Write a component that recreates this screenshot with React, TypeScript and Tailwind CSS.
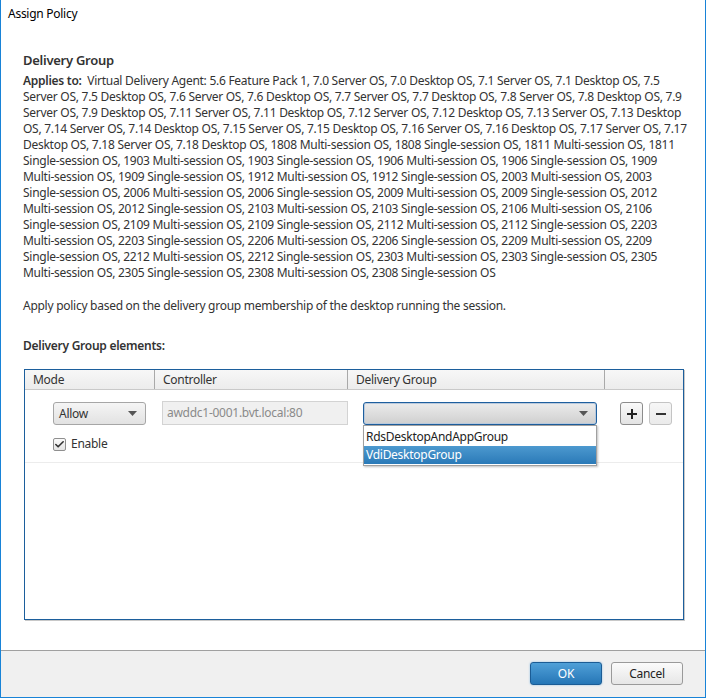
import { Check } from "lucide-react";

const lines = [
  "Server OS, 7.5 Desktop OS, 7.6 Server OS, 7.6 Desktop OS, 7.7 Server OS, 7.7 Desktop OS, 7.8 Server OS, 7.8 Desktop OS, 7.9",
  "Server OS, 7.9 Desktop OS, 7.11 Server OS, 7.11 Desktop OS, 7.12 Server OS, 7.12 Desktop OS, 7.13 Server OS, 7.13 Desktop",
  "OS, 7.14 Server OS, 7.14 Desktop OS, 7.15 Server OS, 7.15 Desktop OS, 7.16 Server OS, 7.16 Desktop OS, 7.17 Server OS, 7.17",
  "Desktop OS, 7.18 Server OS, 7.18 Desktop OS, 1808 Multi-session OS, 1808 Single-session OS, 1811 Multi-session OS, 1811",
  "Single-session OS, 1903 Multi-session OS, 1903 Single-session OS, 1906 Multi-session OS, 1906 Single-session OS, 1909",
  "Multi-session OS, 1909 Single-session OS, 1912 Multi-session OS, 1912 Single-session OS, 2003 Multi-session OS, 2003",
  "Single-session OS, 2006 Multi-session OS, 2006 Single-session OS, 2009 Multi-session OS, 2009 Single-session OS, 2012",
  "Multi-session OS, 2012 Single-session OS, 2103 Multi-session OS, 2103 Single-session OS, 2106 Multi-session OS, 2106",
  "Single-session OS, 2109 Multi-session OS, 2109 Single-session OS, 2112 Multi-session OS, 2112 Single-session OS, 2203",
  "Multi-session OS, 2203 Single-session OS, 2206 Multi-session OS, 2206 Single-session OS, 2209 Multi-session OS, 2209",
  "Single-session OS, 2212 Multi-session OS, 2212 Single-session OS, 2303 Multi-session OS, 2303 Single-session OS, 2305",
  "Multi-session OS, 2305 Single-session OS, 2308 Multi-session OS, 2308 Single-session OS",
];

function Caret({ className = "" }: { className?: string }) {
  return (
    <svg width="9" height="5" viewBox="0 0 9 5" className={className}>
      <path d="M0 0 L9 0 L4.5 5 Z" fill="#555" />
    </svg>
  );
}

export default function App() {
  return (
    <div className="w-[707px] h-[699px] bg-white text-[12px] text-[#333] tracking-[-0.27px]" style={{ fontFamily: '"Noto Sans", sans-serif' }}>
      <div className="w-[706px] h-[698px] border-x border-b border-[#1883d7] flex flex-col">
        <div className="h-[29px] pl-[7px] pt-[6px] text-black leading-[16px]">Assign Policy</div>

        <div className="flex-1 pl-[22px] pr-[20px] pt-[23px]">
          <div className="text-[13px] font-semibold leading-[17px]">Delivery Group</div>
          <div className="mt-[4px] leading-[16px] whitespace-nowrap">
            <div>
              <span className="font-semibold">Applies to:</span>&nbsp; Virtual Delivery Agent: 5.6 Feature Pack 1, 7.0 Server OS, 7.0 Desktop OS, 7.1 Server OS, 7.1 Desktop OS, 7.5
            </div>
            {lines.map((l) => (
              <div key={l}>{l}</div>
            ))}
          </div>
          <div className="mt-[17px] leading-[16px]">Apply policy based on the delivery group membership of the desktop running the session.</div>
          <div className="mt-[24px] font-semibold leading-[16px]">Delivery Group elements:</div>

          <div className="mt-[15px] ml-[1px] w-[660px] h-[251px] border border-[#1c5e9c] shadow-[1px_1px_0_#c8c8c8] flex flex-col">
            <div className="h-[20px] flex bg-gradient-to-b from-[#f7f7f7] to-[#ececec] border-b border-[#c9c9c9] leading-[19px]">
              <div className="w-[130px] pl-[8px] border-r border-[#a9a9a9]">Mode</div>
              <div className="w-[193px] pl-[8px] border-r border-[#a9a9a9]">Controller</div>
              <div className="w-[257px] pl-[8px] border-r border-[#a9a9a9]">Delivery Group</div>
              <div className="flex-1" />
            </div>

            <div className="h-[73px] border-b border-[#ececec] flex pt-[12px]">
              <div className="w-[137px] pl-[28px] flex flex-col">
                <div className="w-[93px] h-[23px] rounded-[3px] border border-[#a6a6a6] bg-gradient-to-b from-[#f5f5f5] to-[#e2e2e2] flex items-center justify-between pl-[5px] pr-[8px]">
                  <span>Allow</span>
                  <Caret />
                </div>
                <div className="mt-[10px] flex items-center gap-[5px]">
                  <div className="w-[13px] h-[13px] border border-[#8f8f8f] rounded-[2px] bg-gradient-to-b from-[#fafafa] to-[#e4e4e4] flex items-center justify-center">
                    <Check size={11} strokeWidth={3.5} color="#333" />
                  </div>
                  <span>Enable</span>
                </div>
              </div>
              <div className="w-[186px] h-[24px] -mt-[1px] border border-[#d3d3d3] bg-[#f0f0f0] text-[#8a8a8a] leading-[22px] pl-[4px]">
                awddc1-0001.bvt.local:80
              </div>
              <div className="ml-[15px] relative w-[234px]">
                <div className="h-[23px] rounded-[3px] border border-[#1e5f9e] bg-gradient-to-b from-[#ececec] to-[#cfcfcf] shadow-[inset_0_0_0_1px_#b9c9dc] flex items-center justify-end pr-[8px]">
                  <Caret />
                </div>
                <div className="absolute left-0 top-[23px] w-[234px] bg-white border border-[#a0a0a0] shadow-[1px_1px_2px_rgba(0,0,0,0.25)] pt-[2px] pb-[1px] z-10">
                  <div className="h-[18px] leading-[18px] pl-[2px] text-[#222]">RdsDesktopAndAppGroup</div>
                  <div className="h-[18px] leading-[18px] pl-[2px] text-white bg-gradient-to-b from-[#4c99cf] to-[#2a7ab8]">VdiDesktopGroup</div>
                </div>
              </div>
              <div className="ml-[23px] flex gap-[6px]">
                <div className="w-[23px] h-[23px] rounded-[3px] border border-[#8c8c8c] bg-gradient-to-b from-[#fafafa] to-[#e3e3e3] flex items-center justify-center">
                  <svg width="12" height="12" viewBox="0 0 12 12"><path d="M6 1 V11 M1 6 H11" stroke="#222" strokeWidth="2" /></svg>
                </div>
                <div className="w-[23px] h-[23px] rounded-[3px] border border-[#c4c4c4] bg-gradient-to-b from-[#f6f6f6] to-[#ebebeb] flex items-center justify-center">
                  <svg width="12" height="12" viewBox="0 0 12 12"><path d="M1 6 H11" stroke="#333" strokeWidth="2" /></svg>
                </div>
              </div>
            </div>
            <div className="flex-1" />
          </div>
        </div>

        <div className="h-[47px] border-t border-[#a0a0a0] bg-[#f0f0f0] flex items-center justify-end gap-[9px] pr-[22px] pb-[1px]">
          <div className="w-[72px] h-[23px] rounded-[3px] border border-[#1b5c95] bg-gradient-to-b from-[#4fa0d8] to-[#2576b6] shadow-[0_0_2px_#7fb6e0] text-white flex items-center justify-center">OK</div>
          <div className="w-[72px] h-[23px] rounded-[3px] border border-[#9a9a9a] bg-gradient-to-b from-[#fbfbfb] to-[#e6e6e6] text-[#222] flex items-center justify-center">Cancel</div>
        </div>
      </div>
    </div>
  );
}
